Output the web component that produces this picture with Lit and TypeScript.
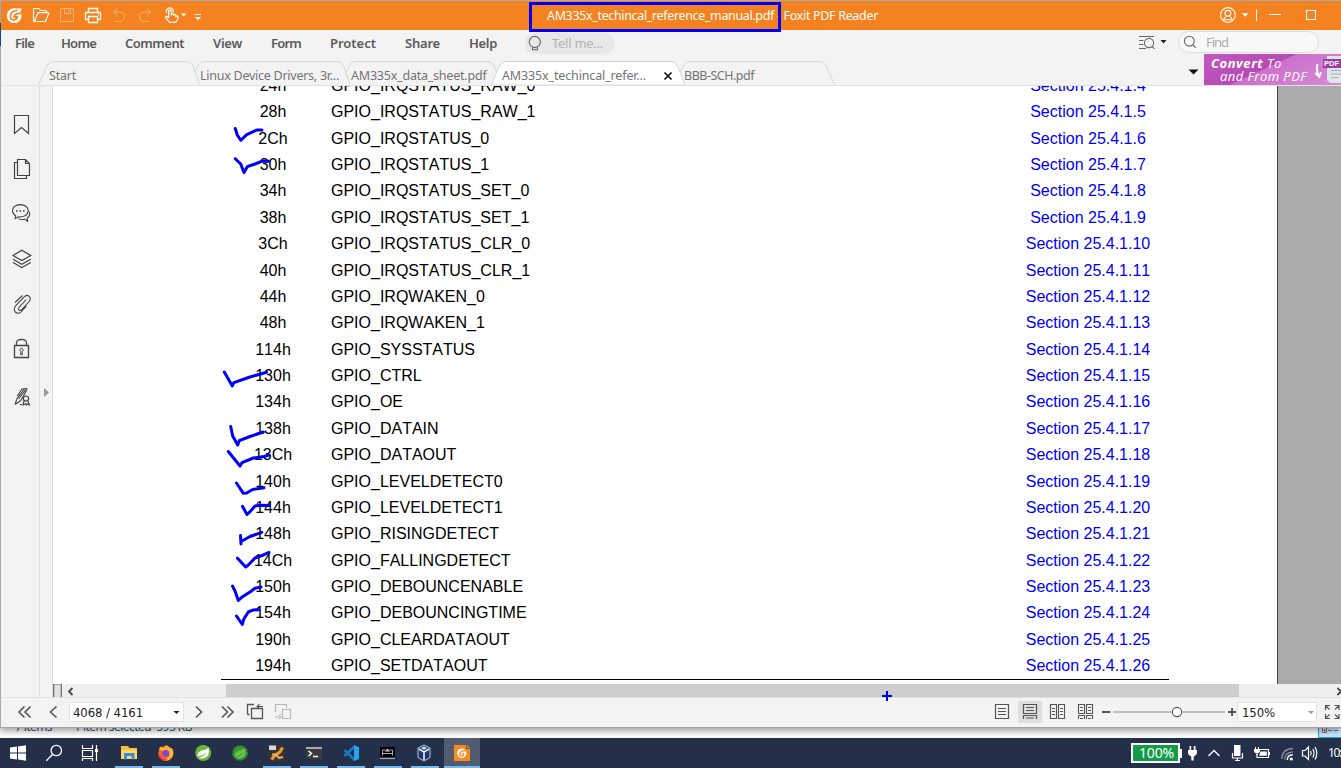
import { LitElement, html, svg, css } from "lit";
import { customElement, property } from "lit/decorators.js";

/* A single-line label whose tracking is adjusted so that it spans `w` pixels. */
@customElement("fit-text")
class FitText extends LitElement {
  @property({ type: Number }) w = 0;
  static styles = css`
    :host { display: inline-block; white-space: pre; flex: none; }
  `;
  firstUpdated() {
    const n = (this.textContent || "").length;
    const natural = this.getBoundingClientRect().width;
    if (n && this.w) this.style.letterSpacing = `${(this.w - natural) / n}px`;
  }
  render() {
    return html`<slot></slot>`;
  }
}

/* An icon cell: x, y, w, h is the window area it covers. */
const ic = (x: number, y: number, w: number, h: number, body: unknown, cls = "") =>
  html`<svg class="ic ${cls}" width=${w} height=${h} viewBox="${x} ${y} ${w} ${h}">${body}</svg>`;

const ROWS: [string, string][] = [
  ["24h", "IRQSTATUS_RAW_0"], ["28h", "IRQSTATUS_RAW_1"], ["2Ch", "IRQSTATUS_0"],
  ["30h", "IRQSTATUS_1"], ["34h", "IRQSTATUS_SET_0"], ["38h", "IRQSTATUS_SET_1"],
  ["3Ch", "IRQSTATUS_CLR_0"], ["40h", "IRQSTATUS_CLR_1"], ["44h", "IRQWAKEN_0"],
  ["48h", "IRQWAKEN_1"], ["114h", "SYSSTATUS"], ["130h", "CTRL"], ["134h", "OE"],
  ["138h", "DATAIN"], ["13Ch", "DATAOUT"], ["140h", "LEVELDETECT0"],
  ["144h", "LEVELDETECT1"], ["148h", "RISINGDETECT"], ["14Ch", "FALLINGDETECT"],
  ["150h", "DEBOUNCENABLE"], ["154h", "DEBOUNCINGTIME"], ["190h", "CLEARDATAOUT"],
  ["194h", "SETDATAOUT"],
];

const CHECKS = [
  "M235.3 128.5L237.3 135L240.7 140.3L246.7 134.7L256.7 130L262 130",
  "M235.3 158.7L240.7 164L244 172.5L247.3 166.7L255 164L261.7 161.3L268.7 161.3",
  "M224.3 372L232.3 386L233.8 382.7L250 377L266.7 372.3",
  "M230.7 426.5L232.7 436L237.7 445L239.3 440.7L250 436.5L263.3 432",
  "M228.3 451.5L240 466L242 462.7L253.3 458L264 456.5L269 455",
  "M236.5 483L243.3 493.3L246.7 493L252.7 489.5L264 487.7",
  "M242.5 506.3L247 514.5L250 511.7L255 506L260 505.3L269 505.5",
  "M240.5 535.5L241 544M241 541.5L250 536.5L261.7 532.3",
  "M237.5 558.2L245.7 567L248.3 565L255 558L260 556.3L269 552.5",
  "M232.5 586L235.3 591.7L238.3 600.5L241.7 597.3L250 592L255 588.3L261 587",
  "M236.5 616L242.3 624.5L243.7 619.3L248.3 612L253.3 609.9L258.7 609.7",
];

@customElement("app-root")
class AppRoot extends LitElement {
  static styles = css`
    :host { display: block; }
    * { box-sizing: border-box; }
    .screen { width: 1341px; height: 768px; overflow: hidden; display: flex; flex-direction: column; position: relative;
      background: #fff; font-family: "Noto Sans", sans-serif; font-size: 13px; color: #666; }
    .ic { display: block; flex: none; fill: none; }
    .window { position: relative; height: 728px; flex: none; display: flex; flex-direction: column; background: #f3f3f3;
      border-top: 1px solid #a8a8a8; border-left: 1px solid #a8a8a8; border-bottom: 1px solid #a3a3a3; box-shadow: 0 3px 7px rgba(0,0,0,.38); z-index: 1; }
    .title { height: 29px; flex: none; display: flex; align-items: center; background: #f58220; color: #fff; }
    .title .name { padding: 0 0 1px 336px; width: 1006px; font-size: 12.5px; display: flex; }
    .menu { height: 24px; flex: none; display: flex; align-items: flex-start; }
    .menus { width: 524px; padding: 3px 0 0 14px; display: flex; line-height: 21px; font-weight: 600; color: #5a5a5a; gap: 29px; height: 24px; }
    .menus .first { width: 17px; }
    .tell { width: 90px; height: 21px; margin: 3px 524px 0 0; border-radius: 11px; background: #e8e8e8; color: #b2b2b2; display: flex; line-height: 20px; }
    .find { width: 141px; height: 22px; margin: 1px 0 0 8px; border: 1px solid #dedede; border-radius: 11px; background: #f8f8f8; color: #ababab; display: flex; line-height: 21px; }
    .tabs { height: 31px; flex: none; position: relative; display: flex; padding-left: 48px; }
    .tabs .shapes { position: absolute; left: 0; top: 6px; }
    .tab { position: relative; width: 151px; padding-top: 12px; line-height: 19px; font-size: 12.5px; color: #747474; display: flex; flex: none; }
    .tab.active { width: 182px; }
    .tab.last { width: 500px; }
    .banner { margin-left: auto; width: 137px; height: 31px; display: flex; color: #fff; font-family: "Open Sans", sans-serif; font-style: italic; overflow: hidden;
      background: linear-gradient(155deg, #c258c0 0%, #b64ab5 45%, #cc70cb 46%, #d78cd6 100%); }
    .slogan { width: 107px; padding: 2px 0 0 7px; display: flex; flex-direction: column; }
    .slogan div { height: 13px; line-height: 14px; font-size: 13px; white-space: nowrap; }
    .slogan div + div { padding-left: 9px; }
    .slogan b { font-weight: 700; }
    .main { height: 612px; flex: none; display: flex; border-top: 1px solid #e2e2e2; }
    .side { width: 39px; border-right: 1px solid #dfdfdf; flex: none; display: flex; flex-direction: column; }
    .gutter { width: 13px; flex: none; border-right: 1px solid #dcdcdc; }
    .content { width: 1288px; flex: none; display: flex; flex-direction: column; position: relative; }
    .view { height: 598px; overflow: hidden; background: #ababab; flex: none; }
    .page { width: 1225px; height: 598px; background: #fff; border-right: 1px solid #444; overflow: hidden; padding-left: 168px; }
    .table { width: 948px; margin-top: -13.1px; border-bottom: 1px solid #000; height: 607px; font: 16px/26.39px "Liberation Sans", Arial, sans-serif; font-kerning: none; color: #000; }
    .row { height: 26.39px; display: grid; grid-template-columns: 104px 1fr 162px; white-space: nowrap; }
    .addr { text-align: center; }
    .reg { padding-left: 6px; }
    .sec { text-align: center; color: #0000fa; }
    .hscroll { height: 13px; flex: none; background: #efefef; display: flex; }
    .thumb { width: 1013px; height: 13px; margin-left: 148px; background: #cdcdcd; }
    .hscroll .end { margin-left: auto; }
    .ink { position: absolute; left: -53px; top: -86px; pointer-events: none; }
    .status { height: 29px; flex: none; border-top: 1px solid #e2e2e2; display: flex; align-items: flex-start; color: #222; font-family: "DejaVu Sans Condensed", "DejaVu Sans", sans-serif; font-stretch: condensed; }
    .box { height: 20px; margin-top: 4px; background: #fff; border: 1px solid #e2e2e2; display: flex; line-height: 19px; }
    .box.pages { width: 115px; padding-left: 3px; }
    .box.zoom { width: 80px; padding-left: 4px; }
    .push { margin-left: auto; }
    .under { height: 10px; flex: none; background: #fff; display: flex; overflow: hidden; color: #405674; font-size: 12px; }
    .under .txt { margin-top: -9px; line-height: 16px; height: 16px; display: flex; padding-left: 15px; }
    .under .txt fit-text + fit-text { margin-left: 22px; }
    .corner { margin-left: auto; }
    .task { height: 30px; flex: none; display: flex; background: #242f4a; position: relative; z-index: 2; }
    .bat { width: 49px; height: 20px; margin: 5px 0 5px auto; border: 2px solid #fff; background: #149b48; color: #fff; font-size: 14px; line-height: 15px; padding-left: 6px; }
    .clock { color: #fff; font-size: 12px; line-height: 29px; padding-left: 8px; width: 21px; overflow: hidden; white-space: nowrap; }
    .mark { position: absolute; left: 529px; top: 2px; width: 252px; height: 30px; border: 3px solid #0000f8; z-index: 3; }
    .cursor { position: absolute; left: 882px; top: 691px; z-index: 3; }
    .edge { position: absolute; left: 0; top: 23px; width: 1px; height: 23px; background: #0b4a86; z-index: 3; }
  `;

  private titleBar() {
    const w = "#fff";
    const f = "#f9b57b";
    return html`<div class="title">
      ${ic(1, 1, 29, 29, svg`<circle cx="14.2" cy="15.7" r="7.4" fill="#fff"/><path d="M17.5 10.5Q11.3 10.6 10.4 16Q10.2 20 14 19.8Q17 19.3 17.3 16.6L14 16.8Q14.6 14 17.5 13.6L21.5 13.4" stroke="#f58220" stroke-width="1.7"/><path d="M17 8.2L21.6 8.4L20.6 11.8" fill="#fff"/>`)}
      ${ic(30, 1, 25, 29, svg`<path d="M34.5 21.5L33.5 20.5V9.5Q33.5 8.5 34.5 8.5H39L40.5 10.5H45.5Q46.5 10.5 46.5 11.5V12.5M34.5 21.5H45.5L48.7 13.7Q48.8 12.6 47.8 12.6H38L34.5 21.5" stroke=${w} stroke-width="1.2"/>`)}
      ${ic(55, 1, 25, 29, svg`<path d="M60.5 8.5H73.5V21.5H60.5ZM64.5 8.5V13.5H70.5V8.5M68.5 10V12" stroke=${f}/>`)}
      ${ic(80, 1, 27, 29, svg`<path d="M88.5 12V8.5H97.5V12M88.5 19.5H85.5V12.5H100.5V19.5H97.5M88.5 16.5H97.5V22.5H88.5ZM98 14.5H99" stroke=${w} stroke-width="1.3"/>`)}
      ${ic(107, 1, 25, 29, svg`<path d="M117.5 8.5L113.5 12L117.5 15.5M114 12H119.5Q124.5 12.3 124.5 16.7Q124.5 21.2 119.5 21.5H115" stroke=${f}/>`)}
      ${ic(132, 1, 27, 29, svg`<path d="M147 8.5L151 12L147 15.5M150.5 12H144.5Q139.5 12.3 139.5 16.7Q139.5 21.2 144.5 21.5H149" stroke=${f}/>`)}
      ${ic(159, 1, 52, 29, svg`<path d="M168.6 18V11.3Q168.6 9.8 169.9 9.8Q171.2 9.8 171.2 11.3V15.5M171.2 13.8Q173.8 13 173.8 16M173.8 14.3Q176 14 176 16.5Q178 15 178 17.8Q177.9 20.3 175.6 22.4H169.6L165.4 17.3Q166.3 15.4 168.6 17.5M166.8 13.2Q165.7 11.8 166.8 9.6Q169.6 6.3 172.8 9.2Q174 11 173 12.3" stroke=${w} stroke-width="1.2"/><path d="M181 13.5H186.5L183.7 16.5ZM195 17H201L198 20.3Z" fill=${w}/><path d="M195 14.5H201" stroke=${w}/>`)}
      <div class="name"><fit-text .w=${227}>AM335x_techincal_reference_manual.pdf</fit-text><fit-text .w=${104}> - Foxit PDF Reader</fit-text></div>
      ${ic(1217, 1, 45, 29, svg`<circle cx="1227.9" cy="15" r="7.4" stroke=${w} stroke-width="1.1"/><circle cx="1227.9" cy="13.3" r="2.9" stroke=${w} stroke-width="1.1"/><path d="M1223.6 19.8Q1224 17.2 1226.3 16.4M1229.5 16.4Q1232 17.2 1232.2 19.8H1223.6" stroke=${w} stroke-width="1.1"/><path d="M1242 13.3H1248.4L1245.2 16.7Z" fill=${w}/><path d="M1256.5 9V21" stroke=${w}/>`)}
      ${ic(1262, 1, 79, 29, svg`<path d="M1269 14.5H1281M1306.5 10.5H1315.5V19.5H1306.5Z" stroke=${w} stroke-width="1.1"/>`)}
    </div>`;
  }

  private menuBar() {
    const items: [string, number][] = [["Home", 35], ["Comment", 59], ["View", 29], ["Form", 30], ["Protect", 46], ["Share", 35], ["Help", 28]];
    return html`<div class="menu">
      <div class="menus"><span class="first"><fit-text .w=${19}>File</fit-text></span>
        ${items.map(([t, w]) => html`<fit-text .w=${w}>${t}</fit-text>`)}</div>
      <div class="tell">${ic(525, 33, 27, 21, svg`<circle cx="534.8" cy="42" r="5.6" stroke="#666" stroke-width="1.1"/><path d="M532.5 47.5V49.8H537.5V47.5" stroke="#666" stroke-width="1.1"/>`)}<fit-text .w=${51}>Tell me...</fit-text></div>
      ${ic(1139, 30, 31, 24, svg`<path d="M1139 36.5H1154M1139 40.5H1143.5M1139 44.5H1143.5M1139 48.5H1146" stroke="#666"/><circle cx="1149" cy="43" r="4.6" stroke="#666" stroke-width="1.1"/><path d="M1152.3 46.5L1154.5 48.8" stroke="#666" stroke-width="1.1"/><path d="M1160.5 40H1166.5L1163.5 43.5Z" fill="#222"/>`)}
      <div class="find">${ic(1179, 32, 27, 20, svg`<circle cx="1189.3" cy="41.2" r="4.9" stroke="#666" stroke-width="1.1"/><path d="M1193 45L1195.6 47.6" stroke="#666" stroke-width="1.1"/>`)}<fit-text .w=${22}>Find</fit-text></div>
    </div>`;
  }

  private tabBar() {
    const line = "#d6d6d6";
    return html`<div class="tabs">
      <svg class="ic shapes" width="900" height="25" viewBox="1 60 900 25">
        <path d="M38.5 84.5L47 66Q49 61.5 53 61.5H186Q191 61.5 193 65.5L199.5 84.5M195 72L198.5 65Q200.5 61.5 204 61.5H337Q341.5 61.5 343.5 65.5L350 84.5M346 72L349.5 65Q351.5 61.5 355 61.5H488Q492 61.5 494 65.5L496.5 72" stroke=${line}/>
        <path d="M491 85L499.5 66Q501.5 61.5 506 61.5H671Q675.5 61.5 677.5 66L685 85Z" fill="#fff" stroke=${line}/>
        <path d="M680 72L683.5 65Q685.5 61.5 689 61.5H819Q824 61.5 826 66L834.5 84.5" stroke=${line}/>
      </svg>
      <div class="tab"><fit-text .w=${27}>Start</fit-text></div>
      <div class="tab"><fit-text .w=${139}>Linux Device Drivers, 3r...</fit-text></div>
      <div class="tab"><fit-text .w=${135.5}>AM335x_data_sheet.pdf</fit-text></div>
      <div class="tab active"><fit-text .w=${144}>AM335x_techincal_refer...</fit-text>${ic(646, 67, 30, 19, svg`<path d="M664.5 73.5L671.5 80.5M671.5 73.5L664.5 80.5" stroke="#111" stroke-width="1.7"/>`)}</div>
      <div class="tab last"><fit-text .w=${70}>BBB-SCH.pdf</fit-text></div>
      ${ic(1184, 54, 20, 31, svg`<path d="M1188.5 69.5H1198.5L1193.5 74.5Z" fill="#111"/>`)}
      <div class="banner">
        <div class="slogan"><div><fit-text .w=${71}><b>Convert</b> To</fit-text></div><div><fit-text .w=${87}>and From PDF</fit-text></div></div>
        ${ic(1311, 54, 30, 31, svg`<path d="M1317.5 64Q1315.8 70 1319 76M1315 73L1319.3 77L1321 72" stroke="#fff" stroke-width="1.8"/><path d="M1327 56H1341V83H1330L1327 80Z" fill="#dfe6ea"/><path d="M1331 70.5H1341M1331 74H1341M1331 77.5H1338" stroke="#9fb0bb"/><path d="M1323 59H1341V68H1323Z" fill="#a03aa2"/><text x="1324" y="66.2" fill="#fff" font-size="7.5" font-weight="700" font-style="normal" font-family="Liberation Sans" textLength="15">PDF</text>`)}
      </div>
    </div>`;
  }

  private sideBar() {
    const s = "#444";
    return html`<div class="side">
      ${ic(1, 86, 38, 60, svg`<path d="M14.5 115.5H28.5V133.5L21.5 127.5L14.5 133.5Z" stroke=${s} stroke-width="1.2"/>`)}
      ${ic(1, 146, 38, 44, svg`<path d="M17.5 159.5H25.5L29.5 163.5V175.5H17.5ZM25.5 159.5V163.5H29.5M17.5 162.5H14.5V178.5H26.5V175.5" stroke=${s} stroke-width="1.2"/>`)}
      ${ic(1, 190, 38, 46, svg`<path d="M15.6 215.8Q12.5 213.8 12.5 210.8Q12.8 205 20.3 204.6Q28 205 28.2 210.8Q27.6 216.6 20.3 217L18.4 216.8L15.2 218.5Z" stroke=${s} stroke-width="1.1"/><path d="M28.6 211Q30.2 213 29.6 215.3Q28.9 217 27.2 218L27.6 221.3L24.8 219.3Q20.5 220 18.3 218.6" stroke=${s} stroke-width="1.1"/><path d="M16 211H17.6M19.5 211H21.1M23 211H24.6" stroke=${s} stroke-width="1.5"/>`)}
      ${ic(1, 236, 38, 46, svg`<path d="M13 255.6L21.8 250.3L30.8 255.6L21.8 260.6ZM13 259.3L21.8 264.3L30.8 259.3M13 262.6L21.8 267.6L30.8 262.6" stroke=${s} stroke-width="1.2"/>`)}
      ${ic(1, 282, 38, 44, svg`<path d="M26.3 299.5L19.2 307.2Q17.7 309.4 19.2 310.3Q20.4 311 21.8 309.6L29.2 301.5Q31.3 298.5 29.3 296.4Q27 294.5 24.5 296.6L16 305.4Q13 309 15.2 312Q18 314.5 21.2 311.8L26.4 306M25.3 295.6Q27.7 294.9 29.3 296.4M15 302.5L22.5 295.5" stroke=${s} stroke-width="1.1"/>`)}
      ${ic(1, 326, 38, 44, svg`<path d="M14.5 345.5H28.5V357.5H14.5ZM16.5 345V342.5Q17 339.5 21.5 339.3Q26 339.5 26.5 342.5V345" stroke=${s} stroke-width="1.3"/><path d="M20.6 354.6L20.9 351.8Q19.5 350.8 20 349.2Q21.5 347.3 23 349.2Q23.4 350.8 22.1 351.8L22.4 354.6Z" stroke=${s} stroke-width="1"/>`)}
      ${ic(1, 370, 38, 60, svg`<path d="M15 404.5L17 398.5L24.5 389Q26.3 387.5 27 389.5L20.8 400.5L15 404.5M17.3 396L21.5 389.5Q23 388 24 389.8M18.5 399L25.5 390" stroke=${s} stroke-width="1.1"/><circle cx="26" cy="398.6" r="2.6" stroke=${s} stroke-width="1.2"/><path d="M24 401L23 405L25.5 403.7L26.3 405L27 403.7L29.5 405L28 401M20 404.5H22" stroke=${s} stroke-width="1.1"/>`)}
    </div>
    <div class="gutter">${ic(40, 86, 12, 330, svg`<path d="M44 388L49 392.5L44 397Z" fill="#999"/>`)}</div>`;
  }

  private document() {
    return html`<div class="content">
      <div class="view"><div class="page"><div class="table">
        ${ROWS.map(([a, r], i) => html`<div class="row"><span class="addr">${a}</span><span class="reg">GPIO_${r}</span><span class="sec">Section 25.4.1.${i + 4}</span></div>`)}
      </div></div></div>
      <div class="hscroll">
        ${ic(53, 684, 25, 13, svg`<path d="M53.7 697V684H61.3V697" fill="#e2e2e2" stroke="#666" stroke-width="1.2"/><path d="M72.5 688L69 691.5L72.5 695" stroke="#444" stroke-width="1.8"/>`)}
        <div class="thumb"></div>
        ${ic(1331, 684, 10, 13, svg`<path d="M1337.5 688L1341 691.5L1337.5 695" stroke="#444" stroke-width="1.8"/>`, "end")}
      </div>
      <svg class="ic ink" width="400" height="640" viewBox="0 0 400 640">
        ${CHECKS.map((d) => svg`<path d=${d} stroke="#0000f8" stroke-width="3" stroke-linejoin="round" stroke-linecap="round"/>`)}
      </svg>
    </div>`;
  }

  private statusBar() {
    const s = "#555";
    return html`<div class="status">
      ${ic(1, 698, 68, 28, svg`<path d="M24.5 706.5L19 712L24.5 717.5M30.5 706.5L25 712L30.5 717.5M56.5 706.5L50.5 712L56.5 717.5" stroke=${s} stroke-width="1.6"/>`)}
      <div class="box pages"><fit-text .w=${70}>4068 / 4161</fit-text>${ic(143, 703, 40, 18, svg`<path d="M173.5 711H179.5L176.5 714Z" fill="#222"/>`)}</div>
      ${ic(184, 698, 60, 28, svg`<path d="M196 706.5L201.5 712L196 717.5M222 706.5L227.5 712L222 717.5M227.5 706.5L233 712L227.5 717.5" stroke=${s} stroke-width="1.6"/>`)}
      ${ic(244, 698, 27, 28, svg`<path d="M251.5 708.5H262.5V718.5H251.5ZM247.5 714.5V704.5H254M247.5 714.5H249.5" stroke=${s} stroke-width="1.3"/><path d="M263 706.5H257M259.5 704.2L257 706.5L259.5 708.5" stroke=${s} stroke-width="1.1"/>`)}
      ${ic(271, 698, 27, 28, svg`<path d="M275.5 712V704.5H286.5V708M281 714.5H279.5M282.5 709.5H290.5V718.5H282.5Z" stroke="#b9b9b9" stroke-width="1.2"/><path d="M275 717H281M278.8 714.8L281 717L278.8 719.2" stroke="#b9b9b9"/>`)}
      ${ic(985, 698, 33, 28, svg`<path d="M995.5 704.5H1008.5V718.5H995.5ZM998 708.5H1006M998 711.5H1006M998 714.5H1006" stroke=${s} stroke-width="1.2"/>`, "push")}
      ${ic(1018, 698, 24, 28, svg`<path d="M1018 701H1042V723H1018Z" fill="#dfdfdf"/><path d="M1023.5 704.5H1036.5V713.5H1023.5ZM1026 707.5H1034M1026 710.5H1034M1023.5 719V715.5H1036.5V719M1026 718H1034" stroke=${s} stroke-width="1.2"/>`)}
      ${ic(1042, 698, 30, 28, svg`<path d="M1050.5 704.5H1056.5V718.5H1050.5ZM1058.5 704.5H1064.5V718.5H1058.5ZM1052 708.5H1055M1052 711.5H1055M1052 714.5H1055M1060 708.5H1063M1060 711.5H1063M1060 714.5H1063" stroke=${s} stroke-width="1.1"/>`)}
      ${ic(1072, 698, 28, 28, svg`<path d="M1078.5 704.5H1084.5V713.5H1078.5ZM1086.5 704.5H1092.5V713.5H1086.5ZM1080 707.5H1083M1080 710.5H1083M1088 707.5H1091M1088 710.5H1091M1078.5 719V715.5H1084.5V719M1086.5 719V715.5H1092.5V719M1080 718.5H1083M1088 718.5H1091" stroke=${s} stroke-width="1.1"/>`)}
      ${ic(1100, 698, 137, 28, svg`<path d="M1113 712H1225" stroke="#c2c2c2" stroke-width="2"/><circle cx="1177" cy="712" r="4.6" fill="#fff" stroke=${s} stroke-width="1.1"/><path d="M1102 712H1110.3M1228 712H1236M1232 708V716" stroke=${s} stroke-width="1.9"/>`)}
      <div class="box zoom"><fit-text .w=${33}>150%</fit-text>${ic(1275, 703, 40, 18, svg`<path d="M1308 711H1314L1311 714Z" fill="#999"/>`)}</div>
      ${ic(1317, 698, 24, 28, svg`<path d="M1325.5 710V705.5H1330M1325.5 705.5L1329.5 709.5M1334.5 705.5H1339V710M1339 705.5L1335 709.5M1325.5 714V718.5H1330M1325.5 718.5L1329.5 714.5M1334.5 718.5H1339V714M1339 718.5L1335 714.5" stroke=${s} stroke-width="1.2"/>`)}
    </div>`;
  }

  private taskBar() {
    const w = "#fff";
    const app = (x: number, wd: number, ul: number, body: unknown) =>
      ic(x, 738, wd, 30, svg`${body}${ul ? svg`<path d="M${ul} 766H${ul + 28}V768H${ul}Z" fill="#76b9ed"/>` : ""}`);
    return html`<div class="task">
      ${app(0, 36, 0, svg`<path d="M10 747.6L17 746.6V752.5H10ZM18 746.4L26 745.3V752.5H18ZM10 753.5H17V759.4L10 758.4ZM18 753.5H26V760.7L18 759.6Z" fill=${w}/>`)}
      ${app(36, 36, 0, svg`<circle cx="56.3" cy="750.5" r="5.2" stroke=${w} stroke-width="1.3"/><path d="M52.5 754.5L46.3 760.7" stroke=${w} stroke-width="1.4"/>`)}
      ${app(72, 36, 0, svg`<path d="M82.5 745V748.5H92.5V745M82.5 750.5H92.5V756.5H82.5ZM82.5 761V758.5H92.5V761M96.5 745V761" stroke=${w} stroke-width="1.2"/><path d="M95 749H98V752H95Z" fill=${w}/>`)}
      ${app(108, 38, 115, svg`<path d="M121 746H128L129.5 748H137V759H121Z" fill="#f5c33c"/><path d="M121 750H137V759H121Z" fill="#ffd869"/><path d="M124 759.5V753H134.5V759.5H131.5V756H127V759.5Z" fill="#3b8dde"/>`)}
      ${app(146, 38, 152, svg`<circle cx="165.8" cy="753.4" r="7.6" fill="#ff5b2e"/><path d="M159 750Q159 747 161 746.5Q162 747.5 164 748Q165 745.5 167 745Q167.5 747 170 748L172.2 748.5Q174.5 753 172.2 757Q168 762 163 760Q171 758 169 752Z" fill="#ffb52c"/><circle cx="165.8" cy="753.3" r="3.4" fill="#7b4bd0"/><path d="M158.4 751Q160 760.5 168 759.5Q164 762 160.5 758.8Z" fill="#ed2a57"/>`)}
      ${app(184, 37, 0, svg`<circle cx="203.2" cy="753" r="8" fill="#6db33f"/><path d="M197.5 756.5Q197.3 751 203 750.2Q206.5 750 208.5 747.5Q210.5 757.5 203 758.4Q200 758.7 198.8 757.6Q204 756.6 207 752Q203.5 755.5 197.5 756.5Z" fill=${w}/>`)}
      ${app(221, 37, 0, svg`<circle cx="240" cy="753" r="7.2" fill="#3b9a2c" stroke="#2f8227" stroke-width="1.8" stroke-dasharray="2 1.4"/><path d="M234.5 757Q234.8 751.5 240 750.5Q243.5 750 245 747.8Q247.3 757.5 240 758.4Q237 758.7 235.8 757.6Q241 756.6 244 752Q240.5 755.5 234.5 757Z" fill="#6fc04f"/>`)}
      ${app(258, 39, 263, svg`<path d="M269 745H285V761H269Z" fill="#3a3330"/><path d="M269 745.5H276V750H269Z" fill="#d8d8d8"/><path d="M271.5 759.5L275.5 755L280 752L282.5 747.5" stroke="#f09a2c" stroke-width="3"/><path d="M272 754.5L276 754.5L279 758L283 757" stroke="#e9b072" stroke-width="2"/>`)}
      ${app(297, 36, 300, svg`<path d="M306 747H322V759H306Z" fill="#3b3b3b"/><path d="M306 747H322V749H306Z" fill="#aaa"/><path d="M308.5 751L311.5 753.5L308.5 756M313 756.5H318" stroke=${w} stroke-width="1.5"/>`)}
      ${app(333, 37, 337, svg`<path d="M355 746L344.5 756M344.5 750L355 760.3" stroke="#1879be" stroke-width="2.6"/><path d="M354 745L359 747.2V759L354 761Z" fill="#2aa3ee"/>`)}
      ${app(370, 37, 374, svg`<path d="M380 747H395V757H380Z" fill="#000"/><path d="M380 758.5H395" stroke="#9aa" stroke-width="1.2"/><path d="M382.5 755.5V750H385M390 750H392.5V755.5M382.5 753.5H392.5" stroke="#aab" stroke-width="1"/><path d="M384.5 751.5L387.5 748.5L390.5 751.5Z" fill="#c4c9d0"/>`)}
      ${app(407, 37, 411, svg`<path d="M424 745L430 748V757.5L424 761L418 757.5V748Z" fill="#1b3768" stroke="#b9c9e6" stroke-width="1"/><path d="M419 749L424 752L429 749M424 752V760" stroke="#e8eefb" stroke-width="1.6"/><path d="M421 748L424 746.4L427 748L424 749.7Z" fill="#dbe5f7"/>`)}
      ${ic(444, 738, 36, 30, svg`<path d="M444 738H480V768H444Z" fill="#525c70"/><path d="M444 766H480V768H444Z" fill="#76b9ed"/><path d="M454 745H466V749H470V761H454Z" fill="#f68b1f"/><path d="M467 745L470 748H467Z" fill="#f68b1f"/><circle cx="461.8" cy="753.3" r="4.7" fill="#fff"/><path d="M466 750.6Q460.3 750.3 459.6 754Q460 757 463 755.7L463.8 753.8H461.8" stroke="#f68b1f" stroke-width="1.3"/>`)}
      <div class="bat"><fit-text .w=${35}>100%</fit-text></div>
      ${ic(1180, 738, 22, 30, svg`<path d="M1180 749H1182V758H1180Z" fill=${w}/><path d="M1188 750H1197V753Q1196.5 756 1193.7 756.5V760.5H1191.3V756.5Q1188.5 756 1188 753ZM1189.5 746H1191.2V750H1189.5ZM1193.8 746H1195.5V750H1193.8Z" fill=${w}/>`)}
      ${ic(1202, 738, 24, 30, svg`<path d="M1208.5 756L1214 750.5L1219.5 756" stroke=${w} stroke-width="1.4"/>`)}
      ${ic(1226, 738, 24, 30, svg`<path d="M1234 745H1240.5V756H1234Z" fill=${w}/><path d="M1232.5 753V758H1242.5V753M1237.3 758V761M1235 760.5H1240" stroke=${w} stroke-width="1.2"/>`)}
      ${ic(1250, 738, 26, 30, svg`<path d="M1260 749.5H1268.5V757.5H1257V754" stroke=${w} stroke-width="1.2"/><path d="M1260.5 751.5H1266.8V755.8H1259ZM1254 749H1260V751.5Q1259.5 753 1257.5 753.3V755H1256.5V753.3Q1254.5 753 1254 751.5ZM1255 747H1256V749H1255ZM1258 747H1259V749H1258ZM1269 752H1270V755H1269Z" fill=${w}/>`)}
      ${ic(1276, 738, 22, 30, svg`<path d="M1281.8 759Q1282 749 1292.8 748.5M1284.8 759.5Q1285 752.3 1292.8 752" stroke="#8790a2" stroke-width="1.3"/><path d="M1287.3 760Q1287.5 755 1292.8 754.8" stroke=${w} stroke-width="1.4"/><circle cx="1291.3" cy="759" r="1.6" fill=${w}/>`)}
      ${ic(1298, 738, 22, 30, svg`<path d="M1302.5 750.5H1305L1308.5 747V759.5L1305 756H1302.5ZM1310.5 751Q1312 753.2 1310.5 755.5M1312.8 749Q1315.3 753.2 1312.8 757.5M1315 747Q1318.7 753.2 1315 759.5" stroke=${w} stroke-width="1.2"/>`)}
      <div class="clock"><fit-text .w=${24}>10:30</fit-text></div>
    </div>`;
  }

  render() {
    return html`<div class="screen">
      <div class="window">
        ${this.titleBar()} ${this.menuBar()} ${this.tabBar()}
        <div class="main">${this.sideBar()} ${this.document()}</div>
        ${this.statusBar()}
      </div>
      <div class="under">
        <div class="txt"><fit-text .w=${37}>7 items</fit-text><fit-text .w=${118}>1 item selected  595 KB</fit-text></div>
        ${ic(1318, 728, 23, 10, svg`<path d="M1318.5 728V737.5H1341" fill="#cce8ff" stroke="#26a0da" stroke-width="1"/><path d="M1319 728H1341V737H1319Z" fill="#cce8ff"/><path d="M1322.5 728V732.5H1326.5V728M1328 730.5H1332M1334 730.5H1338" stroke="#777"/><circle cx="1324.5" cy="730.5" r="1" fill="#c33"/>`, "corner")}
      </div>
      ${this.taskBar()}
      <div class="mark"></div>
      <div class="edge"></div>
      <svg class="ic cursor" width="10" height="10" viewBox="0 0 10 10"><path d="M0 5H10M5 0V10" stroke="#0000f8" stroke-width="2"/></svg>
    </div>`;
  }
}
